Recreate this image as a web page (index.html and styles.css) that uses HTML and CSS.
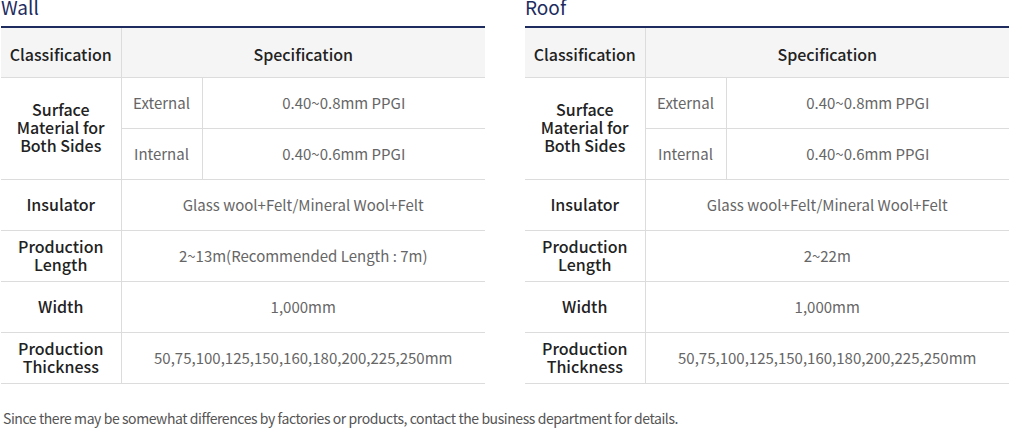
FILE: index.html
```html
<!DOCTYPE html>
<html lang="en">
<head>
<meta charset="utf-8">
<title>Specifications</title>
<link rel="stylesheet" href="styles.css">
</head>
<body>
<div class="page">
  <div class="columns">
    <section class="block">
      <h2 class="title">Wall</h2>
      <table class="spec">
        <colgroup><col class="c1"><col class="c2"><col></colgroup>
        <thead>
          <tr><th class="head">Classification</th><th class="head" colspan="2">Specification</th></tr>
        </thead>
        <tbody>
          <tr><th rowspan="2" class="label">Surface<br>Material for<br>Both Sides</th><td class="sub">External</td><td>0.40~0.8mm PPGI</td></tr>
          <tr><td class="sub">Internal</td><td>0.40~0.6mm PPGI</td></tr>
          <tr><th class="label">Insulator</th><td colspan="2">Glass wool+Felt/Mineral Wool+Felt</td></tr>
          <tr><th class="label">Production<br>Length</th><td colspan="2">2~13m(Recommended Length : 7m)</td></tr>
          <tr><th class="label">Width</th><td colspan="2">1,000mm</td></tr>
          <tr><th class="label">Production<br>Thickness</th><td colspan="2">50,75,100,125,150,160,180,200,225,250mm</td></tr>
        </tbody>
      </table>
    </section>
    <section class="block">
      <h2 class="title">Roof</h2>
      <table class="spec">
        <colgroup><col class="c1"><col class="c2"><col></colgroup>
        <thead>
          <tr><th class="head">Classification</th><th class="head" colspan="2">Specification</th></tr>
        </thead>
        <tbody>
          <tr><th rowspan="2" class="label">Surface<br>Material for<br>Both Sides</th><td class="sub">External</td><td>0.40~0.8mm PPGI</td></tr>
          <tr><td class="sub">Internal</td><td>0.40~0.6mm PPGI</td></tr>
          <tr><th class="label">Insulator</th><td colspan="2">Glass wool+Felt/Mineral Wool+Felt</td></tr>
          <tr><th class="label">Production<br>Length</th><td colspan="2">2~22m</td></tr>
          <tr><th class="label">Width</th><td colspan="2">1,000mm</td></tr>
          <tr><th class="label">Production<br>Thickness</th><td colspan="2">50,75,100,125,150,160,180,200,225,250mm</td></tr>
        </tbody>
      </table>
    </section>
  </div>
  <p class="note">Since there may be somewhat differences by factories or products, contact the business department for details.</p>
</div>
</body>
</html>
```
FILE: styles.css
```css
* { box-sizing: border-box; }
html, body { margin: 0; padding: 0; background: #fff; }
body {
  font-family: "Noto Sans CJK KR", "Noto Sans", sans-serif;
  color: #222;
  overflow: hidden;
}
.page { width: 1009px; padding-left: 1px; }
.columns { display: flex; gap: 40px; }
.block { width: 484px; }
.title {
  margin: -3px 0 0 0;
  height: 29px;
  font-size: 19px;
  line-height: 20px;
  font-weight: 400;
  color: #1d2b5e;
}
.spec {
  width: 100%;
  border-collapse: collapse;
  table-layout: fixed;
  border-top: 2px solid #1d2b5e;
}
.spec .c1 { width: 120px; }
.spec .c2 { width: 81px; }
.spec th, .spec td {
  border-bottom: 1px solid #dcdcdc;
  text-align: center;
  vertical-align: middle;
  padding: 0;
  height: 51px;
}
.spec thead th {
  height: 50px;
  padding-top: 3px;
  background: #f5f5f5;
  font-size: 16px;
  font-weight: 500;
  color: #222;
}
.spec thead th:first-child { border-right: 1px solid #dcdcdc; }
.spec th.label {
  padding-bottom: 2px;
  font-size: 16px;
  font-weight: 500;
  line-height: 18px;
  color: #222;
  border-right: 1px solid #dcdcdc;
}
.spec td {
  font-size: 15px;
  font-weight: 400;
  color: #666;
}
.spec td.sub { border-right: 1px solid #dcdcdc; }
.note {
  margin: 24px 0 0 2px;
  font-size: 14px;
  line-height: 20px;
  letter-spacing: -0.03em;
  color: #555;
}
```
